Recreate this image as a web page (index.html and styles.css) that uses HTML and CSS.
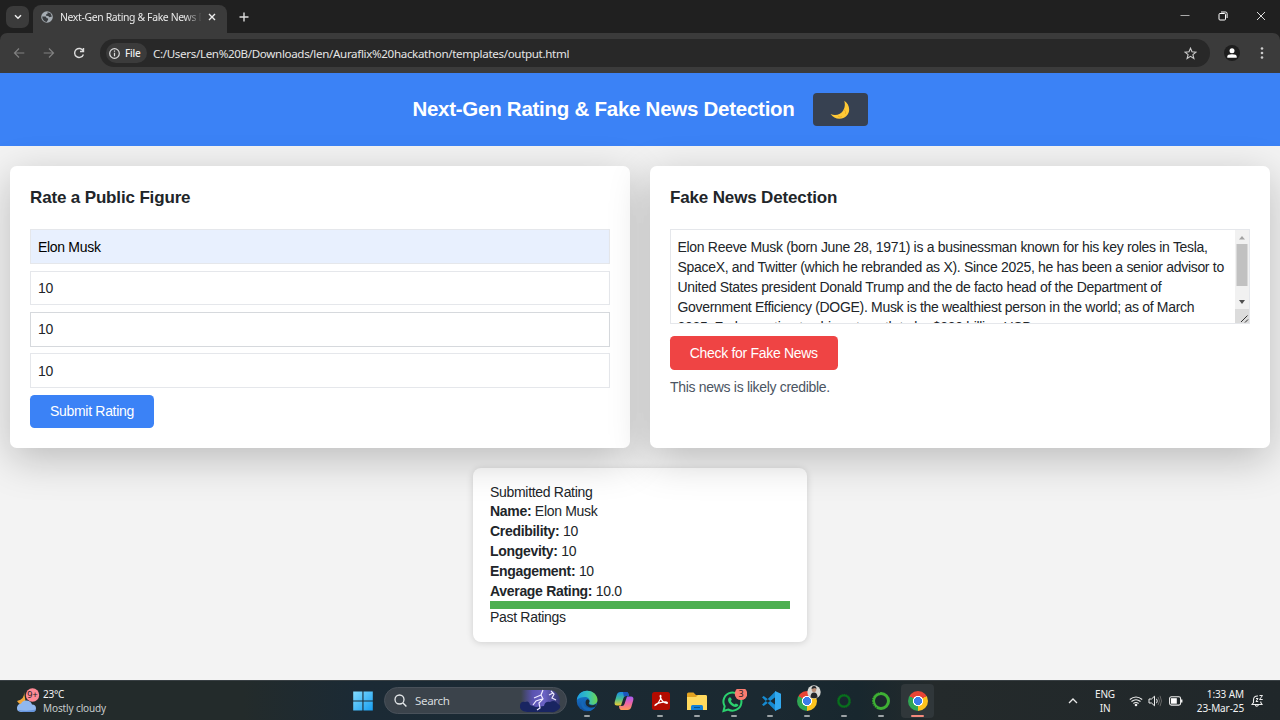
FILE: index.html
```html
<!DOCTYPE html>
<html lang="en">
<head>
<meta charset="utf-8">
<title>Next-Gen Rating &amp; Fake News Detection</title>
<link rel="stylesheet" href="styles.css">
</head>
<body>
<div class="screen">
  <div class="browser">
  <div class="tabs">
    <div class="tab-search"><svg width="8" height="6" viewBox="0 0 8 6"><path d="M1 1.3l3 3 3-3" fill="none" stroke="#eee" stroke-width="1.5"/></svg></div>
    <div class="tab">
      <svg width="12" height="12" viewBox="0 0 12 12"><circle cx="6" cy="6" r="5.8" fill="#a6adb3"/><path d="M1.2 5.5h2.6c1.3 0 1.8.7 1.5 1.6l1.8.5v1.1L5.7 10.9C3 10.6 1.3 8.8 1.2 5.5zM6.5 1.2l3 1 1.4 3.3-2.4.8-1.3-1.2-2.2-.3.2-1.5 1.3-.4z" fill="#3a3d40"/></svg>
      <span class="tab-title">Next-Gen Rating &amp; Fake News D</span>
      <svg width="8" height="8" viewBox="0 0 8 8"><path d="M1 1l6 6M7 1L1 7" stroke="#eee" stroke-width="1.4"/></svg>
    </div>
    <svg class="new-tab" width="10" height="10" viewBox="0 0 10 10"><path d="M5 .5v9M.5 5h9" stroke="#ddd" stroke-width="1.4"/></svg>
    <div class="window-controls">
      <svg width="10" height="10" viewBox="0 0 10 10"><path d="M.5 4.500h9" stroke="#aaa"/></svg>
      <svg width="10" height="10" viewBox="0 0 10 10"><rect x="1" y="2.5" width="6.5" height="6.5" rx="1" fill="none" stroke="#fff"/><path d="M3 1h4.5q1.6 0 1.6 1.6V7" fill="none" stroke="#fff"/></svg>
      <svg width="10" height="10" viewBox="0 0 10 10"><path d="M1 1l8 8M9 1L1 9" stroke="#ddd"/></svg>
    </div>
  </div>
  <div class="toolbar">
    <div class="nav">
      <svg width="12" height="12" viewBox="0 0 12 12"><path d="M11.3 6H1.5M6 1.5L1.5 6 6 10.500" fill="none" stroke="#818181" stroke-width="1.2"/></svg>
      <svg width="12" height="12" viewBox="0 0 12 12"><path d="M.7 6h9.800M6 1.500L10.500 6 6 10.500" fill="none" stroke="#818181" stroke-width="1.2"/></svg>
      <svg width="12" height="12" viewBox="0 0 12 12"><path d="M10.200 4A4.500 4.500 0 1 0 10.400 7.400M10.500 1v3.500H7" fill="none" stroke="#ddd" stroke-width="1.4"/></svg>
    </div>
    <div class="address">
      <div class="file-chip"><svg width="11" height="11" viewBox="0 0 11 11"><circle cx="5.500" cy="5.500" r="4.800" fill="none" stroke="#ddd" stroke-width="1.200"/><path d="M5.500 2.500v1.300M5.500 4.800v3.500" stroke="#ddd" stroke-width="1.200"/></svg><span>File</span></div>
      <span class="url">C:/Users/Len%20B/Downloads/len/Auraflix%20hackathon/templates/output.html</span>
      <svg class="star" width="13" height="13" viewBox="0 0 13 13"><path d="M6.500 1.200l1.500 3.600 3.900.3-3 2.500 1 3.900-3.400-2.100-3.400 2.100 1-3.900-3-2.500 3.900-.3z" fill="none" stroke="#ccc" stroke-width="1.100"/></svg>
    </div>
    <svg class="profile" width="16" height="16" viewBox="0 0 16 16"><circle cx="8" cy="8" r="8" fill="#1e1e1e"/><circle cx="8" cy="5.700" r="2.500" fill="#fff"/><path d="M3.300 12.700v-1.200q0-2.300 4.700-2.300t4.700 2.300v1.200z" fill="#fff"/></svg>
    <svg class="more" width="4" height="14" viewBox="0 0 4 14"><g fill="#ccc"><circle cx="2" cy="2.500" r="1.300"/><circle cx="2" cy="7" r="1.300"/><circle cx="2" cy="11.500" r="1.300"/></g></svg>
  </div>
  </div>
  <header class="header">
    <h1>Next-Gen Rating &amp; Fake News Detection</h1>
    <div class="theme"><svg width="20" height="20" viewBox="0 0 20 20"><path d="M14.300.8C19 4 20.800 10 17.500 14.800c-3.800 5.600-13.200 5.400-16.900-.7 4.900 2 10.400.5 12.900-4.100 1.600-3 1.600-6.200.8-9.200z" fill="#ffc936"/><path d="M14 9.500q2.500 2 1.500 4.500M8 16q2 2 4 .500" fill="none" stroke="#eaa51e" stroke-width=".8"/></svg></div>
  </header>
  <main class="main">
    <div class="cards">
      <section class="card">
        <h2>Rate a Public Figure</h2>
        <div class="field filled">Elon Musk</div>
        <div class="field">10</div>
        <div class="field strong-line">10</div>
        <div class="field">10</div>
        <div class="btn submit">Submit Rating</div>
      </section>
      <section class="card">
        <h2>Fake News Detection</h2>
        <div class="news">
          <div class="news-text">
            <div>Elon Reeve Musk (born June 28, 1971) is a businessman known for his key roles in Tesla,</div>
            <div>SpaceX, and Twitter (which he rebranded as X). Since 2025, he has been a senior advisor to</div>
            <div>United States president Donald Trump and the de facto head of the Department of</div>
            <div>Government Efficiency (DOGE). Musk is the wealthiest person in the world; as of March</div>
            <div>2025, Forbes estimates his net worth to be $330 billion USD</div>
          </div>
          <svg class="scroll" width="14" height="93" viewBox="0 0 14 93"><path fill="#f1f1f1" d="M0 0h14v80H0z"/><path fill="#dcdcdc" d="M0 79h14v14H0z"/><path fill="#c1c1c1" d="M1.500 14h11v42h-11z"/><path fill="#a3a3a3" d="M4 9.500h6L7 6z"/><path fill="#505050" d="M4 70h6l-3 4z"/><path d="M6 92l6.500-6.500M10 92.500l3-3" stroke="#333" stroke-width="1"/></svg>
        </div>
        <div class="btn check">Check for Fake News</div>
        <p class="verdict">This news is likely credible.</p>
      </section>
    </div>
    <section class="result">
      <div class="caption">Submitted Rating</div>
      <div class="row"><b>Name:</b> Elon Musk</div>
      <div class="row"><b>Credibility:</b> 10</div>
      <div class="row"><b>Longevity:</b> 10</div>
      <div class="row"><b>Engagement:</b> 10</div>
      <div class="row"><b>Average Rating:</b> 10.0</div>
      <div class="bar"></div>
      <div class="caption past">Past Ratings</div>
    </section>
  </main>
  <footer class="taskbar">
    <div class="weather">
      <svg width="24" height="26" viewBox="0 0 24 26"><path d="M8 4Q9 11 1 13q3 5 9 3z" fill="#f2a73a"/><path d="M5 24q-4.500-.5-4-4.500.5-3.500 4-3.800 2-3.700 6-3.200 4 .5 5 4 4 .3 4 3.800 0 3.500-4 3.700z" fill="#91b8ee"/><path d="M2 22q2 2 8 2h6q3.500 0 4-2.500-8 2-18 .5z" fill="#6594dd"/><circle cx="16.500" cy="7" r="6.700" fill="#ff8a95"/><text class="badge-text" x="16.400" y="10.300" text-anchor="middle">9+</text></svg>
      <div><div class="temp">23°C</div><div class="sky">Mostly cloudy</div></div>
    </div>
    <svg class="start" width="20" height="20" viewBox="0 0 20 20"><defs><linearGradient id="win" x2="1" y2="1"><stop stop-color="#83dcff"/><stop offset="1" stop-color="#169df0"/></linearGradient></defs><path fill="url(#win)" d="M.2.500h9.200v9H.2zM10.500.500h9.300v9h-9.300zM.2 10.500h9.200v9H.2zM10.500 10.500h9.300v9h-9.300z"/></svg>
    <div class="search">
      <svg width="13" height="13" viewBox="0 0 13 13"><circle cx="5.500" cy="5.500" r="4.500" fill="none" stroke="#e5e8ea" stroke-width="1.300"/><path d="M9 9l3.400 3.400" stroke="#e5e8ea" stroke-width="1.400"/></svg>
      <span>Search</span>
      <svg class="storm" width="44" height="24" viewBox="0 0 44 24"><defs><linearGradient id="night"><stop stop-color="#5a53b8" stop-opacity="0"/><stop offset=".3" stop-color="#5a53b0"/><stop offset=".6" stop-color="#6a62c4"/><stop offset="1" stop-color="#33366e"/></linearGradient></defs><path d="M3 1h29q9 1 10 11-1 9-9 11H8q-5-4-5-10z" fill="url(#night)"/><path d="M2 16q1-4 5-3 4-2 5 3l6 2 8-1q1-5 6-4 5-3 8 2 3 1 2 4-4 5-10 4H9q-8-1-7-7z" fill="#192561"/><path d="M25 1l-2 5 2 4-4 4 1 5-3 2M23 6l-7 3M24 10l-6 2-3 4M33 2l3 3-2 4 4 2M31 6l4-2" fill="none" stroke="#efeaff" stroke-width="1.200"/></svg>
    </div>
    <div class="apps">
      <div class="app"><svg width="22" height="22" viewBox="0 0 22 22"><defs><linearGradient id="e1" x2="1"><stop stop-color="#1b9de3"/><stop offset=".55" stop-color="#35c1bd"/><stop offset="1" stop-color="#6ed64b"/></linearGradient><linearGradient id="e2" x2="0" y2="1"><stop stop-color="#1680d4"/><stop offset="1" stop-color="#124d9c"/></linearGradient></defs><circle cx="11" cy="11" r="10.300" fill="url(#e2)"/><path d="M.8 10C1.500 4.500 5.500.7 11 .7c6.400 0 10.500 4.500 10.500 9 0 3.500-2.600 5-5 5-2.300 0-3.800-1-3.300-2.200 1.500-3-1-5.500-4.200-5.500C5.500 7 2.500 8 .8 10z" fill="url(#e1)"/><path d="M8.600 8.500c-3 3.500-.8 9.500 5.200 9.700 2 .1 3.800-.5 5.300-1.300-1 1.700-3 3.200-5 4C6 21.500 2 12 8.600 8.500z" fill="#1567b7"/><path d="M13.200 12.500c-1.800 1.800 2.300 4.500 7 1.500l-.8 2.500c-4 2.200-9.400.5-9.800-3.500-.2-2 .8-3.300 1.800-3.800 2 .3 2.500 1.700 1.800 3.300z" fill="#1b2a32"/></svg><i></i></div>
      <div class="app"><svg width="22" height="22" viewBox="0 0 22 22"><defs><linearGradient id="c1" x2="0" y2="1"><stop stop-color="#1a8be8"/><stop offset=".5" stop-color="#42bd95"/><stop offset="1" stop-color="#f2cc2e"/></linearGradient><linearGradient id="c2" x2="0" y2="1"><stop stop-color="#a65bf5"/><stop offset=".5" stop-color="#ec66a7"/><stop offset="1" stop-color="#ff9a55"/></linearGradient></defs><path d="M7.500 2h6.500q1.500.5 2 4h-3q-2 0-2.500 2L8 15.500H4q-3 0-2.300-3.500l2-7q.8-3 3.800-3z" fill="url(#c1)"/><path d="M14.500 20H8q-1.800-.5-2-4h3q2 0 2.500-2L14 6.500h4q3 0 2.300 3.500l-2 7q-.8 3-3.800 3z" fill="url(#c2)"/><path d="M10 2h4q1.500.5 2 4h-3q-1.500 0-2 1z" fill="#1b55be"/></svg></div>
      <div class="app"><svg width="22" height="22" viewBox="0 0 22 22"><rect x="2" y="2" width="18" height="18" rx="2.500" fill="#b30b00"/><path d="M5 15.500c2-.2 6-6 6-9.500-.2-1.300-1.300-.5-.7 1C11.300 10 14 13 17 13.300c.7-.2.500-1.500-2-1.400-4 .2-10.300 2-10 3.600z" fill="none" stroke="#fff" stroke-width="1.200"/></svg><i></i></div>
      <div class="app"><svg width="22" height="22" viewBox="0 0 22 22"><path d="M1 4q0-1.500 1.500-1.500h5L10 5h9.500Q21 5 21 6.500V12H1z" fill="#e3a321"/><path d="M1 7h9l2-2h7.500Q21 5 21 6.500V20H1z" fill="#ffd95e"/><path d="M5 20v-3.500Q5 15 6.500 15h9q1.500 0 1.500 1.500V20z" fill="#1380d8"/><path d="M8 17.500h6" stroke="#06528f"/></svg><i></i></div>
      <div class="app"><svg width="26" height="24" viewBox="0 0 26 24"><path d="M3.700 17.200a9 9 0 1 1 3.400 3.300L2.500 22z" fill="none" stroke="#2bd06e" stroke-width="2"/><path d="M7.500 9.200Q9 7.500 10 9l.8 1.800-1 1.200q1.300 2.500 3.800 3.600l1.200-1.200 2.200 1q1 .5-.3 1.800c-3.700 3-11.500-4-9.200-8z" fill="#2bd06e"/><circle cx="20" cy="4.700" r="6.300" fill="#fa7c70"/><text class="badge-text" x="20" y="8" text-anchor="middle">3</text></svg><i></i></div>
      <div class="app"><svg width="22" height="22" viewBox="0 0 22 22"><path d="M2 7.300l1.700-1.400L15.500 15v5.700zM2 14.700l1.700 1.400L15.500 7V1.300z" fill="#168bd2"/><path d="M15 1l6 2.700v14.600L15 21z" fill="#32a9ef"/></svg><i></i></div>
      <div class="app"><div class="chrome"></div><svg class="avatar" width="14" height="14" viewBox="0 0 14 14"><circle cx="7" cy="7" r="6.700" fill="#d9d9d5"/><circle cx="7" cy="4.800" r="2.400" fill="#ba8d76"/><path d="M4.500 4q0-3 2.500-3t2.500 3L8 3zM3.500 12.600q0-5 3.500-5t3.500 5q-3.500 1.500-7 0z" fill="#25272b"/></svg><i></i></div>
      <div class="app"><svg width="22" height="22" viewBox="0 0 22 22"><circle cx="11" cy="11" r="5.700" fill="none" stroke="#08701d" stroke-width="2.500"/><circle cx="11" cy="11" r="6.800" fill="none" stroke="#173027" stroke-width=".7" stroke-dasharray="1 1.200"/></svg><i></i></div>
      <div class="app"><svg width="22" height="22" viewBox="0 0 22 22"><circle cx="11" cy="11" r="7.500" fill="none" stroke="#3eb034" stroke-width="3"/><path d="M10 2Q2 3 2.500 11q0 5 4 7" fill="none" stroke="#1b3927" stroke-width="1.300" stroke-dasharray="1 1.300"/></svg><i></i></div>
      <div class="app active"><div class="chrome"></div><i></i></div>
    </div>
    <div class="tray">
      <svg class="up" width="10" height="8" viewBox="0 0 10 8"><path d="M1 6l4-4 4 4" fill="none" stroke="#e8e8e8" stroke-width="1.300"/></svg>
      <div class="lang">ENG<br>IN</div>
      <svg width="14" height="14" viewBox="0 0 14 14"><path d="M.8 5.500q6.200-5 12.400 0M2.500 7.500q4.500-3.500 9 0M4.400 9.500q2.600-2 5.200 0" fill="none" stroke="#eee" stroke-width="1.100"/><circle cx="7" cy="11" r="1.300" fill="#eee"/></svg>
      <svg class="sound" width="14" height="14" viewBox="0 0 14 14"><path d="M1 5h2.500L6.500 2.200v9.600L3.500 9H1z" fill="none" stroke="#eee"/><path d="M8.500 4.800q1.500 2.200 0 4.400" fill="none" stroke="#eee"/><path d="M10 3q3 4 0 8M12 1.800q3 5.200 0 10.400" fill="none" stroke="#666"/></svg>
      <svg class="battery" width="14" height="10" viewBox="0 0 14 10"><rect x=".6" y=".8" width="11" height="8.300" rx="1.800" fill="none" stroke="#eee" stroke-width="1.100"/><rect x="2" y="2.200" width="5.800" height="5.500" fill="#fff"/><path d="M12.700 3.500v3" stroke="#eee" stroke-width="1.500"/></svg>
      <div class="clock">1:33 AM<br>23-Mar-25</div>
      <svg class="bell" width="13" height="14" viewBox="0 0 13 14"><path d="M7 2Q2.500 1.700 2.500 6v2.500L1 10.500h10L9.800 8.500V7.500M4.300 11q1.500 2.500 3.200 0" fill="none" stroke="#eee" stroke-width="1.100"/><path d="M8.500 1.500h3l-3 4h3.200M5 4.500h2l-2 3h2.200" fill="none" stroke="#eee"/></svg>
    </div>
  </footer>
</div>
</body>
</html>
```
FILE: styles.css
```css
* { box-sizing: border-box; }
body { margin: 0; font-family: "Liberation Sans", Arial, sans-serif; font-size: 14px; letter-spacing: -.308px; color: #212529; }
svg { display: block; flex: none; }
h1, h2, p { margin: 0; }
.screen { width: 1280px; height: 720px; overflow: hidden; display: flex; flex-direction: column; background: #f3f3f3; white-space: nowrap; }

.browser { flex: none; background: #202020; letter-spacing: 0; }
.tabs { height: 33px; display: flex; padding-left: 6px; font: 10.4px "Noto Sans", sans-serif; }
.tab-search { width: 23px; height: 22px; margin: 6px 4px 0 0; border-radius: 7px; background: #3b3b3b; display: flex; align-items: center; justify-content: center; }
.tab { width: 194px; height: 28px; margin-top: 5px; padding: 0 10px 4px 8px; border-radius: 8px 8px 0 0; background: #3b3b3b; color: #eaeaea; display: flex; align-items: center; }
.tab-title { width: 141px; margin: 0 7px 0 7px; overflow: hidden; letter-spacing: -.34px; -webkit-mask-image: linear-gradient(90deg, #000 88%, transparent 101%); mask-image: linear-gradient(90deg, #000 88%, transparent 101%); }
.new-tab { margin: 12px 0 0 12px; }
.window-controls { margin: 11px 14px 0 auto; display: flex; gap: 28px; }

.toolbar { height: 40px; background: #3b3b3b; border-radius: 7px 7px 0 0; display: flex; align-items: center; font-family: "Noto Sans", sans-serif; }
.nav { width: 100px; padding-left: 13px; display: flex; gap: 18px; }
.address { width: 1110px; height: 28px; border-radius: 14px; background: #282828; display: flex; align-items: center; padding-left: 6px; }
.file-chip { width: 41px; height: 20px; border-radius: 10px; background: #3b3b3b; color: #eee; display: flex; align-items: center; padding-left: 3px; gap: 5px; font-size: 10px; font-weight: 500; letter-spacing: -.2px; }
.url { margin-left: 6px; color: #e5e5e5; font-size: 11.6px; letter-spacing: -.34px; }
.star { margin: 0 13px 0 auto; }
.profile { margin-left: 14px; }
.more { margin-left: 20px; }

.header { height: 73px; flex: none; background: #3b82f6; display: flex; align-items: center; justify-content: center; gap: 18px; color: #fff; }
.header h1 { font-size: 20.5px; letter-spacing: -.26px; line-height: 28px; padding-bottom: 1px; }
.theme { width: 55px; height: 33px; border-radius: 4px; background: #374151; display: flex; align-items: center; justify-content: center; }

.main { flex: 1; padding: 20px 10px; display: flex; flex-direction: column; align-items: center; gap: 20px; }
.cards { width: 100%; height: 282px; display: grid; grid-template-columns: 1fr 1fr; gap: 20px; position: relative; }
.card { padding: 20px; border-radius: 6.7px; background: #fff; box-shadow: 0 11px 42px rgba(0, 0, 0, .23); }
.card h2 { font-size: 17px; letter-spacing: -.15px; line-height: 24px; margin-bottom: 19.4px; }
.field { height: 34.8px; margin-bottom: 6.5px; padding: 0 7px; border: 1px solid #e5e7eb; display: flex; align-items: center; }
.filled { background: #e8f0fe; color: #000; }
.strong-line { border-color: #d6d9dd; }
.btn { height: 33.5px; border-radius: 4.5px; color: #fff; display: flex; align-items: center; justify-content: center; }
.submit { width: 124px; background: #3b82f6; }
.check { width: 167.5px; background: #ef4444; }
.news { height: 95px; margin-bottom: 11.8px; border: 1px solid #e5e7eb; display: flex; overflow: hidden; }
.news-text { flex: 1; padding: 7px 6.5px; line-height: 20px; }
.verdict { margin-top: 7px; line-height: 20px; color: #4b5563; }

.result { width: 334px; height: 174px; padding: 16px 17px; border-radius: 8px; background: #fff; box-shadow: 0 1px 7px rgba(0, 0, 0, .15); }
.caption { height: 17px; line-height: 17px; }
.row { height: 20px; line-height: 20px; }
.bar { height: 8.3px; background: #4caf50; }

.taskbar { height: 40px; flex: none; display: flex; align-items: center; background: linear-gradient(90deg, #232b2b 0, #232b2b 19%, #1b2a35 28%, #1b2931 60%, #18272e 67%, #242a2b 73%, #20272a 100%); border-top: 1px solid #394044; font: 10px/14px "Noto Sans", sans-serif; letter-spacing: 0; color: #f3f3f3; }
.weather { width: 353px; padding-left: 16px; display: flex; align-items: center; gap: 3px; }
.temp { letter-spacing: -.2px; }
.sky { color: #c8cbcc; letter-spacing: -.12px; }
.badge-text { font: 9px "Noto Sans", sans-serif; fill: #222; }
.search { width: 183px; height: 27px; margin: 0 2px 0 11px; padding: 0 4px 0 9px; border-radius: 14px; border: 1px solid #49515a; background: #3b434b; display: flex; align-items: center; gap: 8px; font-size: 11.6px; letter-spacing: -.35px; color: #d6dadd; }
.storm { margin-left: auto; }
.apps { display: flex; }
.app { width: 36.7px; height: 40px; position: relative; display: flex; justify-content: center; align-items: center; }
.app i { position: absolute; bottom: 4px; left: 15px; width: 6px; height: 2px; border-radius: 1px; background: #9da3a6; }
.app.active::before { content: ""; position: absolute; inset: 3px 2px; border-radius: 4px; background: #30373a; }
.app.active i { left: 12px; width: 13px; background: #f58a7c; }
.chrome { position: relative; width: 20px; height: 20px; border-radius: 50%; background: radial-gradient(circle, #3b7de9 0 3.8px, #fff 4.2px 4.9px, transparent 5.3px), conic-gradient(from -60deg, #e94435 0 120deg, #fcc31e 120deg 240deg, #30a653 240deg); }
.avatar { position: absolute; left: 18px; top: 4px; }
.tray { flex: 1; padding-right: 16px; display: flex; align-items: center; justify-content: flex-end; }
.lang { width: 22px; margin: 0 13px 0 16px; text-align: center; letter-spacing: -.2px; }
.sound { margin-left: 5px; }
.battery { margin-left: 7px; }
.clock { width: 56px; margin: 0 7px 0 5px; text-align: right; letter-spacing: -.1px; }
```
